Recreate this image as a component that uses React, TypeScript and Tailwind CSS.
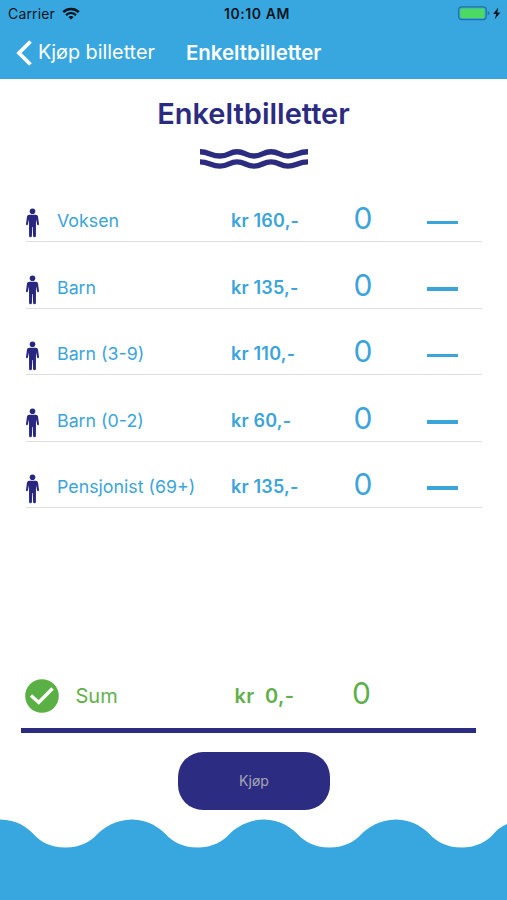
import React from 'react';

interface Ticket {
    label: string;
    price: string;
    count: number;
}

const tickets: Ticket[] = [
    { label: 'Voksen', price: 'kr 160,-', count: 0 },
    { label: 'Barn', price: 'kr 135,-', count: 0 },
    { label: 'Barn (3-9)', price: 'kr 110,-', count: 0 },
    { label: 'Barn (0-2)', price: 'kr 60,-', count: 0 },
    { label: 'Pensjonist (69+)', price: 'kr 135,-', count: 0 },
];

const WifiIcon = () => (
    <svg width="18" height="13" viewBox="0 0 18 13" fill="none" stroke="#06151d">
        <path d="M1.2 5.1C5.6 .9 12.4 .9 16.8 5.1" strokeWidth="2.5" />
        <path d="M4 8.1C6.9 5.5 11.1 5.5 14 8.1" strokeWidth="2.3" />
        <path d="M9 12.4 6.3 9.9C7.9 8.6 10.1 8.6 11.7 9.9Z" fill="#06151d" stroke="none" />
    </svg>
);

const BatteryIcon = () => (
    <svg width="43" height="15" viewBox="0 0 43 15">
        <rect x=".6" y=".8" width="27.6" height="12.8" rx="3" fill="none" stroke="#237399" strokeWidth="1.2" />
        <rect x="2.2" y="2.4" width="24.4" height="9.6" rx="1.4" fill="#4cd964" />
        <path d="M29.6 5.1q1.8.6 1.8 2.1t-1.8 2.1z" fill="#237399" />
        <path d="M40.2 1.5 35.2 8h3l-1.4 5.2L42.3 6.4h-3.1z" fill="#06151d" />
    </svg>
);

const PersonIcon = () => (
    <svg width="14" height="30" viewBox="0 0 14 30" fill="#27277f">
        <circle cx="6.5" cy="3.3" r="2.8" />
        <path d="M3.2 6.7H9.8Q11.7 6.7 12 8.6L13 15.9Q13 17.2 12.1 17.2 11.3 17.2 11.1 16.2L10 11.3 9.9 28Q9.9 29.3 8.5 29.3 7.2 29.3 7.1 28L6.8 19H6.2L5.9 28Q5.8 29.3 4.5 29.3 3.1 29.3 3.1 28L3 11.3 1.9 16.2Q1.7 17.2 .9 17.2 0 17.2 0 15.9L1 8.6Q1.3 6.7 3.2 6.7Z" />
    </svg>
);

const Waves = () => (
    <svg width="108" height="21" viewBox="0 0 108 21" fill="none" stroke="#2b2b80" strokeWidth="5.4">
        <path d="M0 2.8C9 2.8 11 7 20 7S29 2.8 37 2.8 46 7 54 7 63 2.8 71 2.8 80 7 88 7 98 2.8 108 2.8" />
        <path d="M0 12.9C9 12.9 11 17.1 20 17.1S29 12.9 37 12.9 46 17.1 54 17.1 63 12.9 71 12.9 80 17.1 88 17.1 98 12.9 108 12.9" />
    </svg>
);

const TicketRow: React.FC<{ ticket: Ticket }> = ({ ticket }) => (
    <div className="flex h-[66.4px] items-end border-b-[1.5px] border-[#dedede] text-[#3ba4db]">
        <div className="mb-[3px] w-[31px]">
            <PersonIcon />
        </div>
        <div className="mb-2 w-[174px] text-[17.8px] leading-6 whitespace-nowrap">{ticket.label}</div>
        <div className="mb-2 w-[116px] text-[18px] leading-6 font-semibold tracking-[0.2px] whitespace-nowrap">
            {ticket.price}
        </div>
        <div className="mb-[5px] w-8 text-center text-[30px] leading-9">{ticket.count}</div>
        <button type="button" className="mb-[17px] ml-12 h-[3.5px] w-[31px] bg-[#3ba4db]" />
    </div>
);

export default function App() {
    return (
        <div className="flex h-[900px] w-[507px] flex-col overflow-hidden bg-white font-['Inter',sans-serif]">
            <header className="h-[79px] bg-[#39a7df]">
                <div className="grid h-[27px] grid-cols-3 items-center pr-[6px] pl-2 text-[14px] text-[#06151d]">
                    <div className="flex items-center gap-[7px]">
                        <span className="tracking-[0.15px]">Carrier</span>
                        <WifiIcon />
                    </div>
                    <span className="pl-[5px] text-center font-semibold tracking-[0.55px]">10:10 AM</span>
                    <div className="flex justify-end">
                        <BatteryIcon />
                    </div>
                </div>
                <div className="flex h-[51px] items-center pl-4 text-[20px] text-white">
                    <svg width="16" height="26" viewBox="0 0 16 26" fill="none" stroke="white" strokeWidth="3.8">
                        <path d="M14.5 1.5 3 13 14.5 24.5" />
                    </svg>
                    <span className="ml-[6px] w-[148px] pt-px text-[19.8px] whitespace-nowrap">Kjøp billetter</span>
                    <span className="pt-px text-[20.4px] font-semibold">Enkeltbilletter</span>
                </div>
            </header>

            <div className="flex flex-col items-center pt-[17px]">
                <h1 className="text-[29px] leading-9 font-semibold text-[#2b2b80]">Enkeltbilletter</h1>
                <div className="mt-[17px] pl-px">
                    <Waves />
                </div>
            </div>

            <main className="mt-[6px] pr-[25px] pl-[26px]">
                {tickets.map((ticket, index) => (
                    <TicketRow key={index} ticket={ticket} />
                ))}
            </main>

            <div className="mt-auto mr-[31px] ml-[21px] flex h-[65px] shrink-0 items-center border-b-[5px] border-[#2b2b80] pb-[5px] pl-[3.5px] text-[20px] text-[#5fb04a]">
                <svg width="34" height="34" viewBox="0 0 34 34">
                    <circle cx="17" cy="17" r="16.8" fill="#5bb045" />
                    <path d="M6 16.5 13.7 23.5 27.5 9.5" fill="none" stroke="white" strokeWidth="3.4" />
                </svg>
                <span className="ml-[17px] w-[159px]">Sum</span>
                <span className="w-[111px] font-semibold tracking-[0.3px] whitespace-pre">kr  0,-</span>
                <span className="mb-1 w-8 text-center text-[30px]">0</span>
            </div>

            <button
                type="button"
                className="mt-[19px] ml-[178px] h-[58px] w-[152px] shrink-0 rounded-[25px] bg-[#2c2c83] pb-px text-[14px] text-[#a6a6b5]"
            >
                Kjøp
            </button>
            <svg className="mt-[9px] shrink-0" width="507" height="81" viewBox="0 0 507 81" fill="#39a7df">
                <path d="M0 .5C17 .5 28 9 34 15.500 41 23 50 28.500 65.500 28.500S91 22 97 15.500 116 .5 132 .5 160 9 166 15.500 182 28.500 197.500 28.500 223 22 229 15.500 248 .5 264 .5 292 9 298 15.500 314 28.500 329.500 28.500 355 22 361 15.500 380 .5 396 .5 424 9 430 15.500 446 28.500 461.500 28.500 487 22 493 15.500Q498 9 507 5V81H0Z" />
            </svg>
        </div>
    );
}
